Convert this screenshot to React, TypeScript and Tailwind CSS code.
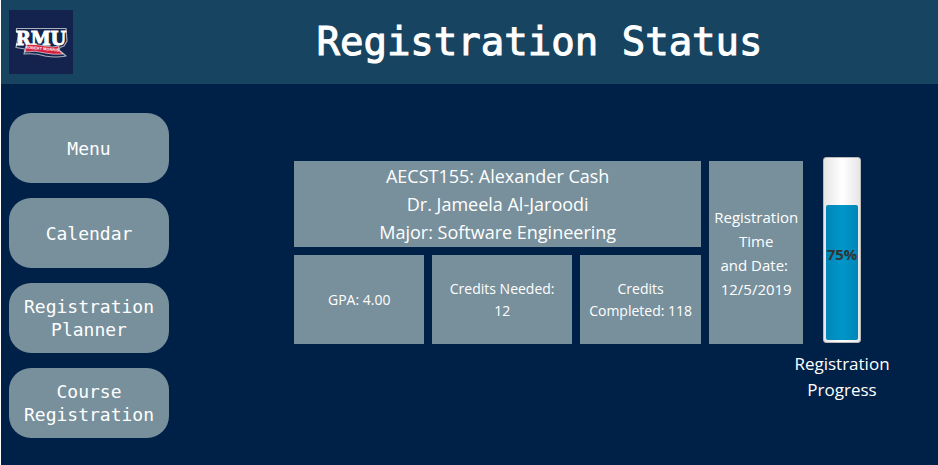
const navItems = ["Menu", "Calendar", "Registration Planner", "Course Registration"];

function Logo() {
  return (
    <svg className="size-16 shrink-0" viewBox="0 0 64 64" role="img" aria-label="Robert Morris University">
      <rect width="64" height="64" fill="#14234d" />
      <path
        d="M7.5 18.5 H57 L58 31 L55 36 L51 37.5 L50 40 L57 46 Q47 48 36 46 Q27 43 15 44 L16 39 L7 37.5 L10 23 L7.5 22 Z"
        fill="#14234d"
        stroke="#a9b0bf"
        strokeWidth="1.2"
        strokeLinejoin="round"
      />
      <text
        x="32"
        y="34.5"
        textAnchor="middle"
        fontFamily="'DejaVu Serif', serif"
        fontWeight="700"
        fontSize="18"
        fill="#ffffff"
        stroke="#ffffff"
        strokeWidth="0.9"
      >
        RMU
      </text>
      <path
        d="M18 34.5 Q28 34 36 36 Q44 38 50 36 L49 40 L54 44 Q44 45 36 43 Q26 40 16 42 Z"
        fill="#d3203c"
        stroke="#ffffff"
        strokeWidth="0.6"
      />
      <text
        x="33"
        y="40"
        textAnchor="middle"
        fontFamily="'Liberation Sans', sans-serif"
        fontWeight="700"
        fontSize="4"
        fill="#ffffff"
        transform="rotate(5 33 40)"
      >
        ROBERT MORRIS
      </text>
    </svg>
  );
}

export default function App() {
  return (
    <div className="min-h-screen border-l border-white bg-[#002147] font-['Open_Sans','Noto_Sans',sans-serif] text-white">
      <header className="flex h-[84px] items-center bg-[#174460] px-2">
        <Logo />
        <h1 className="ml-[76px] flex-1 text-center font-['DejaVu_Sans_Mono',monospace] text-[39px] leading-[48px] [-webkit-text-stroke:1px_white]">
          Registration Status
        </h1>
      </header>

      <div className="flex items-start">
        <nav aria-label="Main" className="flex w-[168px] shrink-0 flex-col gap-[15px] pt-[29px] pl-2">
          {navItems.map((item) => (
            <button
              key={item}
              type="button"
              className="h-[70px] rounded-[22px] bg-[#78909c] px-3 font-['DejaVu_Sans_Mono',monospace] text-lg leading-[23px]"
            >
              {item}
            </button>
          ))}
        </nav>

        <main className="mr-[49px] ml-[125px] flex flex-1 items-start pt-[73px]">
          <div className="mt-1 grid flex-1 grid-cols-[131fr_140fr_122fr_94fr] grid-rows-[86px_89px] gap-2 text-center">
            <section className="col-span-3 flex flex-col justify-center bg-[#78909c] text-lg leading-7">
              <p>AECST155: Alexander Cash</p>
              <p>Dr. Jameela Al-Jaroodi</p>
              <p>Major: Software Engineering</p>
            </section>
            <section className="col-start-4 row-span-2 flex flex-col justify-center bg-[#78909c] text-[15px] leading-6">
              <p>Registration</p>
              <p>Time</p>
              <p>and Date:&nbsp;</p>
              <p>12/5/2019</p>
            </section>
            <section className="flex flex-col justify-center bg-[#78909c] text-sm leading-[22px]">
              <p>GPA: 4.00</p>
            </section>
            <section className="flex flex-col justify-center bg-[#78909c] text-sm leading-[22px]">
              <p>Credits Needed:</p>
              <p>12</p>
            </section>
            <section className="flex flex-col justify-center bg-[#78909c] text-sm leading-[22px]">
              <p>Credits</p>
              <p>Completed: 118</p>
            </section>
          </div>

          <div className="-ml-2 flex w-[94px] flex-col items-center">
            <div
              role="progressbar"
              aria-label="Registration Progress"
              aria-valuenow={75}
              aria-valuemin={0}
              aria-valuemax={100}
              className="relative flex h-[186px] w-[38px] flex-col justify-end rounded-[3px] border border-[#b9b9b9] bg-linear-to-r from-[#e6e6e6] via-white to-[#e6e6e6] p-0.5"
            >
              <div className="h-3/4 rounded-xs bg-linear-to-r from-[#0086b8] via-[#0096c9] to-[#0086b8]" />
              <span className="absolute inset-0 flex items-center justify-center pt-2 text-[15px] font-bold text-[#333333]">
                75%
              </span>
            </div>
            <p className="mt-2 text-center text-[17px] leading-[26px]">Registration Progress</p>
          </div>
        </main>
      </div>
    </div>
  );
}
